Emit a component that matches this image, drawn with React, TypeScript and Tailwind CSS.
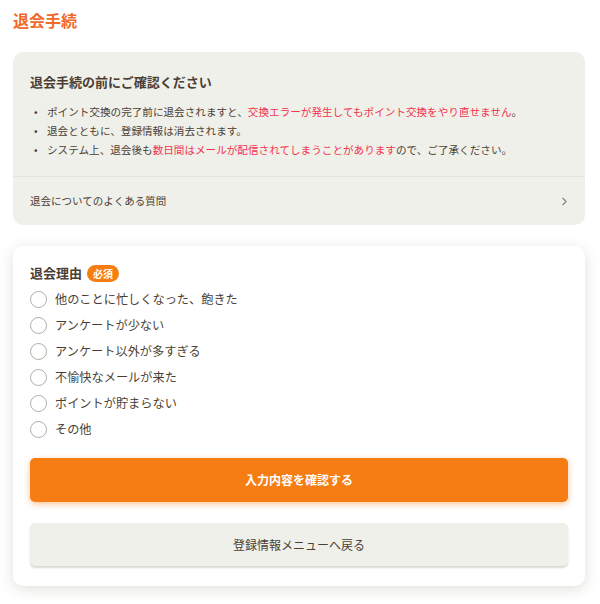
import { ChevronRight } from 'lucide-react';

const reasons = [
  '他のことに忙しくなった、飽きた',
  'アンケートが少ない',
  'アンケート以外が多すぎる',
  '不愉快なメールが来た',
  'ポイントが貯まらない',
  'その他',
];

export default function App() {
  return (
    <div
      className="min-h-[604px] w-[600px] bg-white text-[#4b3f33]"
      style={{ fontFamily: '"Noto Sans CJK JP", "Noto Sans", sans-serif' }}
    >
      <div className="ml-[13px] w-[572px] pt-[8px] pb-[18px]">
        <h1 className="text-[16px] font-bold leading-[24px] text-[#f26a2b]">退会手続</h1>

        <section className="mt-[20px] rounded-[10px] bg-[#f0f0eb]">
          <div className="px-[17px] pt-[19px] pb-[17px]">
            <h2 className="text-[13px] font-bold leading-[22px]">退会手続の前にご確認ください</h2>
            <ul className="mt-[9px] text-[10.6px] leading-[19px]">
              <li className="flex">
                <span className="w-[17px] shrink-0 pl-[4px]">•</span>
                <span>
                  ポイント交換の完了前に退会されますと、
                  <span className="text-[#f2344f]">交換エラーが発生してもポイント交換をやり直せません</span>。
                </span>
              </li>
              <li className="flex">
                <span className="w-[17px] shrink-0 pl-[4px]">•</span>
                <span>退会とともに、登録情報は消去されます。</span>
              </li>
              <li className="flex">
                <span className="w-[17px] shrink-0 pl-[4px]">•</span>
                <span>
                  システム上、退会後も
                  <span className="text-[#f2344f]">数日間はメールが配信されてしまうことがあります</span>
                  ので、ご了承ください。
                </span>
              </li>
            </ul>
          </div>
          <div className="flex h-[49px] items-center justify-between border-t border-[#e4e3dd] pl-[17px] pr-[14px] text-[10.5px]">
            <span>退会についてのよくある質問</span>
            <ChevronRight className="h-[13px] w-[13px] text-[#8d857b]" strokeWidth={2.2} />
          </div>
        </section>

        <section className="mt-[21px] rounded-[10px] bg-white px-[17px] pt-[17px] pb-[20px] shadow-[0_3px_14px_rgba(90,80,50,0.18)]">
          <div className="flex items-center gap-[5px]">
            <span className="text-[13px] font-bold leading-[20px]">退会理由</span>
            <span className="rounded-full bg-[#f57d13] px-[6px] text-[10px] font-bold leading-[17px] text-white">
              必須
            </span>
          </div>
          <div className="mt-[3px] flex flex-col">
            {reasons.map((r) => (
              <label key={r} className="flex h-[26px] items-center gap-[8px] text-[12.2px]">
                <span className="h-[17px] w-[17px] shrink-0 rounded-full border-[1.5px] border-[#b3aca3] bg-white" />
                <span>{r}</span>
              </label>
            ))}
          </div>
          <button className="mt-[16px] flex h-[44px] w-full items-center justify-center rounded-[5px] bg-[#f57d13] text-[12px] font-bold text-white shadow-[0_2px_6px_rgba(245,125,19,0.45)]">
            入力内容を確認する
          </button>
          <button className="mt-[21px] flex h-[43px] w-full items-center justify-center rounded-[5px] bg-[#f0f0eb] text-[12px] text-[#4b3f33] shadow-[0_2px_2px_rgba(90,80,50,0.22)]">
            登録情報メニューへ戻る
          </button>
        </section>
      </div>
    </div>
  );
}
